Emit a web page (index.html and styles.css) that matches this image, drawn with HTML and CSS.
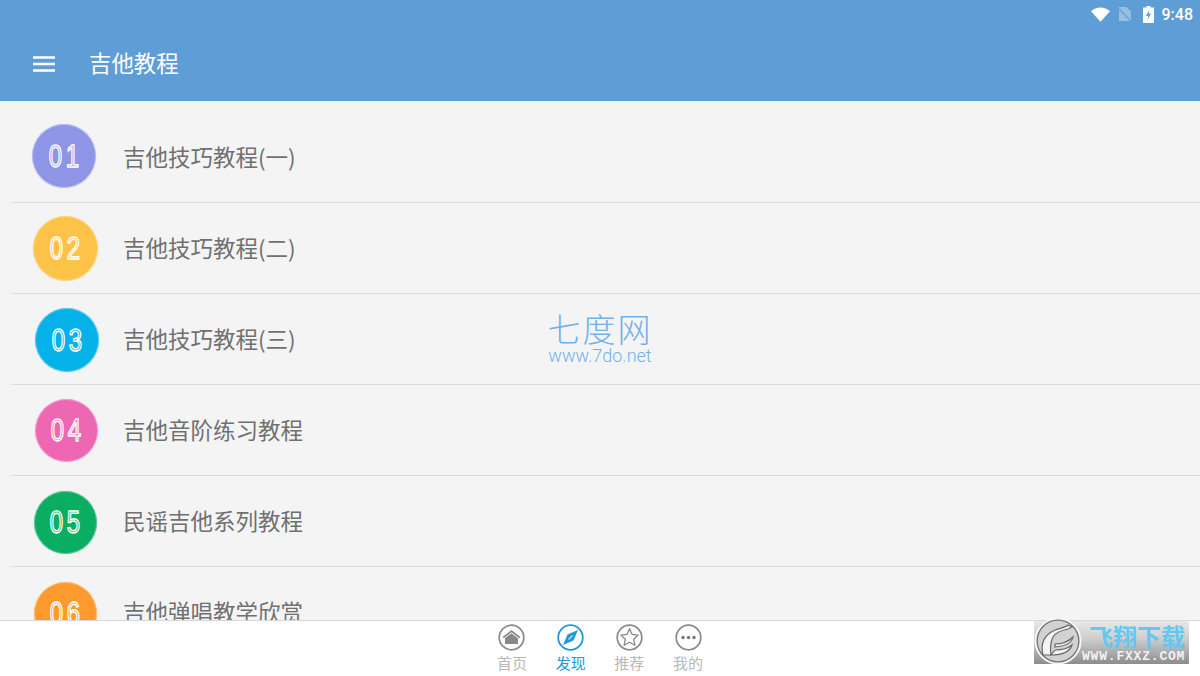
FILE: index.html
```html
<!DOCTYPE html>
<html lang="zh-CN">
<head>
    <meta charset="UTF-8">
    <meta name="viewport" content="width=device-width, initial-scale=1.0">
    <title>吉他教程</title>
    <link rel="stylesheet" href="styles.css">
</head>
<body>
    <div class="app">
        <header class="app-header">
            <div class="status-bar">
                <svg class="status-wifi" width="19" height="15" viewBox="0 0 19 15"><path d="M0 4.200C2.600 1.700 5.900.4 9.500.4s6.900 1.300 9.500 3.800L9.500 14.800z" fill="#fff"/></svg>
                <svg class="status-sim" width="12" height="16" viewBox="0 0 12 16"><path d="M0 1h7.500L12 5.500V15H0z" fill="#fff" opacity=".35"/><path d="M0 3l12 12" stroke="#5f9dd6" stroke-width="1.200"/></svg>
                <svg class="status-battery" width="11" height="17" viewBox="0 0 11 17"><path d="M3.500 0h4v1.500H11V17H0V1.500h3.500z" fill="#fff"/><path d="M6.500 3.500L3 10h2.200l-.7 4L8 7.500H5.700z" fill="#5f9dd6"/></svg>
                <span class="status-time">9:48</span>
            </div>
            <div class="toolbar">
                <svg class="menu-icon" width="22" height="16" viewBox="0 0 22 16"><path d="M0 1.500h22M0 8h22M0 14.500h22" stroke="#fff" stroke-width="2.400"/></svg>
                <h1 class="toolbar-title">吉他教程</h1>
            </div>
        </header>

        <main class="course-list">
            <div class="course-row">
                <span class="course-badge badge-purple"><span class="badge-num">01</span></span>
                <span class="course-name">吉他技巧教程(一)</span>
            </div>
            <div class="course-row">
                <span class="course-badge badge-yellow"><span class="badge-num">02</span></span>
                <span class="course-name">吉他技巧教程(二)</span>
            </div>
            <div class="course-row">
                <span class="course-badge badge-blue"><span class="badge-num">03</span></span>
                <span class="course-name">吉他技巧教程(三)</span>
            </div>
            <div class="course-row">
                <span class="course-badge badge-pink"><span class="badge-num">04</span></span>
                <span class="course-name">吉他音阶练习教程</span>
            </div>
            <div class="course-row">
                <span class="course-badge badge-green"><span class="badge-num">05</span></span>
                <span class="course-name">民谣吉他系列教程</span>
            </div>
            <div class="course-row">
                <span class="course-badge badge-orange"><span class="badge-num">06</span></span>
                <span class="course-name">吉他弹唱教学欣赏</span>
            </div>
        </main>

        <nav class="tab-bar">
            <div class="tab">
                <svg class="tab-icon" viewBox="0 0 27 27"><circle cx="13.500" cy="13.500" r="12.300" fill="none" stroke="#8a8a8a" stroke-width="1.700"/><path d="M13.500 6L22.500 13l-1.200 1.300-7.800-6-7.800 6L4.500 13z" fill="#888"/><path d="M7 14.200l6.500-5 6.500 5V20H7z" fill="#888"/></svg>
                <span class="tab-label">首页</span>
            </div>
            <div class="tab tab-active">
                <svg class="tab-icon" viewBox="0 0 27 27"><circle cx="13.500" cy="13.500" r="12.300" fill="none" stroke="#1c9ad6" stroke-width="1.800"/><path d="M21 6L16.500 16.500 6 21l4.500-10.500z" fill="#1c9ad6"/><path d="M15.500 11.500l-4 4" stroke="#bfe3f5" stroke-width="1.200"/></svg>
                <span class="tab-label">发现</span>
            </div>
            <div class="tab">
                <svg class="tab-icon" viewBox="0 0 27 27"><circle cx="13.500" cy="13.500" r="12.300" fill="none" stroke="#8a8a8a" stroke-width="1.700"/><path d="M13.500 4.800l2.600 5.600 6 .7-4.400 4.100 1.200 6-5.400-3-5.400 3 1.200-6-4.400-4.100 6-.7z" fill="none" stroke="#888" stroke-width="1.300" stroke-linejoin="round"/></svg>
                <span class="tab-label">推荐</span>
            </div>
            <div class="tab">
                <svg class="tab-icon" viewBox="0 0 27 27"><circle cx="13.500" cy="13.500" r="12.300" fill="none" stroke="#8a8a8a" stroke-width="1.700"/><circle cx="8" cy="13.500" r="1.700" fill="#777"/><circle cx="13.500" cy="13.500" r="1.700" fill="#777"/><circle cx="19" cy="13.500" r="1.700" fill="#777"/></svg>
                <span class="tab-label">我的</span>
            </div>
        </nav>

        <div class="mark-7do">
            <div class="mark-7do-name">七度网</div>
            <div class="mark-7do-url">www.7do.net</div>
        </div>

        <div class="mark-fxxz">
            <svg class="mark-fxxz-logo" width="48" height="48" viewBox="0 0 48 48">
                <circle cx="24" cy="24" r="22.500" fill="#d2d2d2" stroke="#f6f6f6" stroke-width="2"/>
                <circle cx="24" cy="24" r="20.800" fill="none" stroke="#767676" stroke-width="1.300"/>
                <path d="M9 38C6 26 10 18 21 13c6-2 11-3 13-5l4 2-4 2c-5 1-12 3-15 8-2 4-3 11-2 18z" fill="#f4f4f4" stroke="#666" stroke-width="1.200"/>
                <path d="M21 27c6 0 13-2 18-7-1 5-6 9-18 10zM17 38c2-3 4-5 5-5 6 0 11-1 16-5-2 6-8 10-21 10z" fill="#f4f4f4" stroke="#666" stroke-width="1.200"/>
            </svg>
            <div class="mark-fxxz-text">
                <div class="mark-fxxz-name">飞翔下载</div>
                <div class="mark-fxxz-url">WWW.FXXZ.COM</div>
            </div>
        </div>
    </div>
</body>
</html>
```

FILE: styles.css
```css
* {
    box-sizing: border-box;
}

body {
    margin: 0;
    font-family: "Noto Sans CJK SC", "Noto Sans", sans-serif;
    background-color: #f4f4f4;
}

.app {
    position: relative;
    display: flex;
    flex-direction: column;
    width: 1200px;
    height: 676px;
    overflow: hidden;
}

.app-header {
    flex: none;
    height: 101px;
    background-color: #5f9dd6;
    color: #fff;
}

.status-bar {
    display: flex;
    align-items: center;
    justify-content: flex-end;
    height: 28px;
    padding-right: 7px;
}

.status-wifi {
    margin-right: 9px;
}

.status-sim {
    margin-right: 12px;
}

.status-battery {
    margin-right: 8px;
}

.status-time {
    font-family: Roboto, sans-serif;
    font-size: 16px;
    font-weight: 500;
}

.toolbar {
    display: flex;
    align-items: center;
    height: 73px;
    padding: 0 0 5px 33px;
}

.menu-icon {
    margin: 4px 34px 0 0;
}

.toolbar-title {
    margin: 0;
    font-size: 22.400px;
    font-weight: 400;
}

.course-list {
    flex: 1;
    min-height: 0;
    overflow: hidden;
    padding: 11px 0 0 11px;
}

.course-row {
    display: flex;
    align-items: center;
    height: 91px;
    border-bottom: 1px solid #dcdcdc;
}

.course-badge {
    display: flex;
    align-items: center;
    justify-content: center;
    flex: none;
    border-radius: 50%;
    border: 1px solid;
}

.badge-num {
    display: inline-block;
    font-family: "Liberation Sans", sans-serif;
    font-size: 32px;
    line-height: 36px;
    letter-spacing: 5px;
    margin-right: -5px;
    color: transparent;
    -webkit-text-stroke: 1.500px #fff;
    transform: translateX(-1px) scaleX(.75);
}

.badge-purple {
    width: 64px;
    height: 64px;
    margin: 0 27px 2px 21px;
    background-color: #8e94e6;
    border-color: #b9bcf0;
    box-shadow: 0 0 1px #b9bcf0;
}

.badge-yellow {
    width: 65px;
    height: 65px;
    margin: 0 25px 0 22px;
    background-color: #fdc348;
    border-color: #fdd584;
    box-shadow: 0 0 1px #fdd584;
}

.badge-blue {
    width: 64px;
    height: 64px;
    margin: 2px 24px 0 24px;
    background-color: #04b1e8;
    border-color: #5ccbee;
    box-shadow: 0 0 1px #5ccbee;
}

.badge-pink {
    width: 63px;
    height: 63px;
    margin: 0 25px 0 24px;
    background-color: #ee67b2;
    border-color: #f3a0d0;
    box-shadow: 0 0 1px #f3a0d0;
}

.badge-green {
    width: 63px;
    height: 63px;
    margin: 2px 26px 0 23px;
    background-color: #0aae62;
    border-color: #5cc897;
    box-shadow: 0 0 1px #5cc897;
}

.badge-orange {
    width: 63px;
    height: 63px;
    margin: 2px 26px 0 23px;
    background-color: #fd9a2e;
    border-color: #fdbb75;
    box-shadow: 0 0 1px #fdbb75;
}

.course-name {
    margin-bottom: 2px;
    font-size: 22.500px;
    color: #707070;
}

.tab-bar {
    flex: none;
    display: flex;
    justify-content: center;
    height: 56px;
    padding: 3px 0 0 0;
    background-color: #fff;
    border-top: 1px solid #d8d8d8;
}

.tab {
    display: flex;
    flex-direction: column;
    align-items: center;
    width: 58.700px;
}

.tab-icon {
    display: block;
    width: 27px;
    height: 27px;
}

.tab-label {
    margin-top: 1px;
    font-size: 15px;
    line-height: 22px;
    color: #b8b8b8;
}

.tab-active .tab-label {
    color: #1c9ad6;
}

/* watermarks that sit over the page */
.mark-7do {
    position: absolute;
    left: 547px;
    top: 310px;
    width: 106px;
    color: #74b0ea;
    text-align: center;
}

.mark-7do-name {
    font-size: 33px;
    font-weight: 300;
    line-height: 36px;
    letter-spacing: 2px;
    white-space: nowrap;
}

.mark-7do-url {
    margin-top: 2px;
    font-family: Roboto, sans-serif;
    font-size: 18px;
    font-weight: 300;
    line-height: 15px;
    white-space: nowrap;
}

.mark-fxxz {
    position: absolute;
    left: 1034px;
    top: 621px;
    display: flex;
    width: 155px;
    height: 43px;
    background: linear-gradient(#e8e8e8, #cfcfcf 40%, #8d8d8d 100%);
}

.mark-fxxz-logo {
    flex: none;
    margin-top: -4px;
}

.mark-fxxz-text {
    min-width: 0;
}

.mark-fxxz-name {
    margin-left: 7px;
    font-size: 24px;
    font-weight: 700;
    line-height: 29px;
    color: #62c8f0;
    white-space: nowrap;
}

.mark-fxxz-url {
    font-family: "Liberation Mono", monospace;
    font-size: 13px;
    font-weight: 700;
    line-height: 14px;
    letter-spacing: .8px;
    color: #f2f2f2;
    white-space: nowrap;
}
```
